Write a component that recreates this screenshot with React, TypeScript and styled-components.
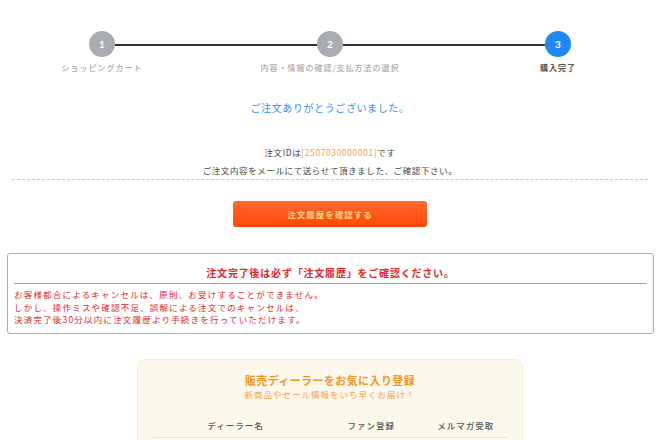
import { Fragment } from "react";
import styled, { createGlobalStyle } from "styled-components";

const GlobalStyle = createGlobalStyle`
  body {
    margin: 0;
    background: #fff;
    font-family: "Noto Sans CJK JP", "Noto Sans", sans-serif;
    color: #444;
  }
`;

const Page = styled.div`
  width: 660px;
  padding-bottom: 40px;
`;

const Stepper = styled.div`
  display: flex;
  align-items: flex-start;
  width: 482px;
  margin-left: 89px;
  padding-top: 31px;
`;
const Step = styled.div`
  display: flex;
  flex-direction: column;
  align-items: center;
  width: 26px;
`;
const Circle = styled.div<{ $active?: boolean }>`
  width: 26px;
  height: 26px;
  border-radius: 50%;
  background: ${(p) => (p.$active ? "#1e88f5" : "#a9acb1")};
  color: #fff;
  font-size: 10px;
  font-weight: 700;
  font-family: "Lato", "Noto Sans", sans-serif;
  display: flex;
  align-items: center;
  justify-content: center;
`;
const StepLabel = styled.div<{ $active?: boolean }>`
  margin-top: 5px;
  white-space: nowrap;
  font-size: 8px;
  line-height: 12px;
  letter-spacing: 1px;
  color: ${(p) => (p.$active ? "#555" : "#acacac")};
  font-weight: ${(p) => (p.$active ? 700 : 500)};
`;
const Connector = styled.div`
  flex: 1;
  height: 2px;
  margin-top: 12.5px;
  background: #2c333e;
`;

const Thanks = styled.div`
  margin-top: 27px;
  text-align: center;
  font-size: 10px;
  line-height: 14px;
  letter-spacing: 0.6px;
  color: #3a8ef0;
`;

const OrderInfo = styled.div`
  margin: 28px 12px 0;
  text-align: center;
  font-size: 8.5px;
  line-height: 18px;
  letter-spacing: 0.6px;
  color: #444;
  border-bottom: 1px dashed #c8c8c8;
`;
const OrderId = styled.span`
  color: #f7a04c;
`;

const ButtonRow = styled.div`
  display: flex;
  justify-content: center;
  margin-top: 21px;
`;
const HistoryButton = styled.button`
  width: 194px;
  height: 26px;
  border: none;
  border-radius: 3px;
  background: linear-gradient(#ff6a2e, #ff4708);
  color: #ffd57e;
  font-family: inherit;
  font-size: 8.5px;
  font-weight: 700;
  letter-spacing: 1px;
  cursor: pointer;
`;

const Notice = styled.div`
  margin: 26px 6px 0 7px;
  border: 1.5px solid #f88e8e;
  border-radius: 3px;
  padding: 12px 6px 7px;
  color: #e8242a;
`;
const NoticeTitle = styled.div`
  text-align: center;
  font-size: 10px;
  line-height: 14px;
  font-weight: 700;
  letter-spacing: 0.8px;
  padding-bottom: 3px;
  border-bottom: 1.5px solid #f08080;
`;
const NoticeBody = styled.div`
  margin-top: 4px;
  font-size: 8.5px;
  line-height: 12.5px;
  letter-spacing: 1.2px;
`;

const DealerCard = styled.div`
  margin: 25px 0 0 137px;
  width: 386px;
  box-sizing: border-box;
  padding: 13px 15px 40px;
  background: #fdf8ec;
  border: 1px solid #f6ebd3;
  border-radius: 8px;
`;
const CardTitle = styled.div`
  text-align: center;
  font-size: 11px;
  line-height: 15px;
  font-weight: 700;
  letter-spacing: 0.4px;
  color: #f7921e;
`;
const CardSub = styled.div`
  text-align: center;
  font-size: 8.5px;
  line-height: 12px;
  letter-spacing: 1px;
  color: #f5a04f;
`;
const DealerTable = styled.table`
  width: 100%;
  margin-top: 19px;
  border-collapse: collapse;
`;
const Th = styled.th<{ $w: number }>`
  width: ${(p) => p.$w}px;
  padding: 0 0 6px;
  font-size: 8.5px;
  line-height: 12px;
  font-weight: 500;
  letter-spacing: 1px;
  color: #555;
  border-bottom: 1px solid #ebe2d0;
`;

const steps = [
  { n: 1, label: "ショッピングカート" },
  { n: 2, label: "内容・情報の確認/支払方法の選択" },
  { n: 3, label: "購入完了", active: true },
];

export default function App() {
  return (
    <Page>
      <GlobalStyle />
      <Stepper>
        {steps.map((s, i) => (
          <Fragment key={s.n}>
            {i > 0 && <Connector />}
            <Step>
              <Circle $active={s.active}>{s.n}</Circle>
              <StepLabel $active={s.active}>{s.label}</StepLabel>
            </Step>
          </Fragment>
        ))}
      </Stepper>

      <Thanks>ご注文ありがとうございました。</Thanks>

      <OrderInfo>
        <div>
          注文IDは<OrderId>[2507030000001]</OrderId>です
        </div>
        <div>ご注文内容をメールにて送らせて頂きました、ご確認下さい。</div>
      </OrderInfo>

      <ButtonRow>
        <HistoryButton>注文履歴を確認する</HistoryButton>
      </ButtonRow>

      <Notice>
        <NoticeTitle>注文完了後は必ず「注文履歴」をご確認ください。</NoticeTitle>
        <NoticeBody>
          お客様都合によるキャンセルは、原則、お受けすることができません。
          <br />
          しかし、操作ミスや確認不足、誤解による注文でのキャンセルは、
          <br />
          決済完了後30分以内に注文履歴より手続きを行っていただけます。
        </NoticeBody>
      </Notice>

      <DealerCard>
        <CardTitle>販売ディーラーをお気に入り登録</CardTitle>
        <CardSub>新商品やセール情報をいち早くお届け！</CardSub>
        <DealerTable>
          <thead>
            <tr>
              <Th $w={166}>ディーラー名</Th>
              <Th $w={107}>ファン登録</Th>
              <Th $w={83}>メルマガ受取</Th>
            </tr>
          </thead>
        </DealerTable>
      </DealerCard>
    </Page>
  );
}
